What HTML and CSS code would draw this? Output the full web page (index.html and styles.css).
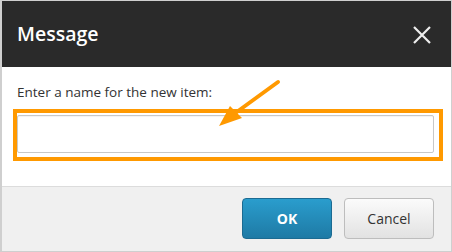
FILE: index.html
```html
<!DOCTYPE html>
<html>
<head>
<meta charset="utf-8">
<link rel="stylesheet" href="styles.css">
</head>
<body>
<div class="dialog">
  <div class="header">
    <span class="title">Message</span>
    <svg class="close" width="20" height="20" viewBox="0 0 20 20">
      <path d="M2 2 L18 18 M18 2 L2 18" stroke="#eeeeee" stroke-width="2.2" fill="none"/>
    </svg>
  </div>
  <div class="content">
    <div class="label">Enter a name for the new item:</div>
    <input class="field" type="text">
    <div class="highlight"></div>
    <svg class="arrow" width="80" height="60" viewBox="0 0 80 60">
      <line x1="76" y1="7" x2="32" y2="39" stroke="#ff9900" stroke-width="4" stroke-linecap="round"/>
      <polygon points="17,51 28,31 40,43" fill="#ff9900"/>
    </svg>
  </div>
  <div class="footer">
    <button class="btn ok">OK</button>
    <button class="btn cancel">Cancel</button>
  </div>
</div>
</body>
</html>
```

FILE: styles.css
```css
html, body {
  margin: 0;
  padding: 0;
  background: #ffffff;
}
.dialog {
  width: 452px;
  height: 252px;
  box-sizing: border-box;
  border: 1px solid #cfcfcf;
  border-left-width: 2px;
  display: flex;
  flex-direction: column;
  font-family: "Open Sans", "Liberation Sans", sans-serif;
  position: relative;
}
.header {
  height: 66px;
  flex: none;
  background: #2a2a2a;
  display: flex;
  align-items: center;
  justify-content: space-between;
  padding: 0 19px 0 15px;
}
.title {
  color: #ffffff;
  font-size: 19.5px;
  font-weight: 600;
  margin-top: -1px;
}
.close {
  display: block;
  margin-top: 1px;
}
.content {
  flex: none;
  height: 120px;
  box-sizing: border-box;
  background: #ffffff;
  padding: 16px 16px 0 15px;
  position: relative;
  border-bottom: 1px solid #dcdcdc;
}
.label {
  font-size: 13.5px;
  color: #333333;
  line-height: 18px;
}
.field {
  display: block;
  box-sizing: border-box;
  width: 417px;
  height: 38px;
  margin-top: 14px;
  border: 1px solid #c8c8c8;
  border-radius: 2px;
  background: #ffffff;
  box-shadow: inset 0 1px 1px rgba(0,0,0,0.05);
  padding: 0;
}
.highlight {
  position: absolute;
  left: 11px;
  top: 42px;
  width: 430px;
  height: 52px;
  box-sizing: border-box;
  border: 4px solid #ff9900;
}
.arrow {
  position: absolute;
  left: 200px;
  top: 8px;
}
.footer {
  flex: 1;
  background: #f0f0f0;
  display: flex;
  justify-content: flex-end;
  align-items: flex-start;
  gap: 12px;
  padding: 11px 17px 0 0;
}
.btn {
  width: 90px;
  height: 41px;
  border-radius: 4px;
  font-family: "Open Sans", "Liberation Sans", sans-serif;
  font-size: 14px;
  cursor: pointer;
  box-sizing: border-box;
  padding: 0;
}
.ok {
  color: #ffffff;
  font-weight: 700;
  background: linear-gradient(#2a9dcd, #1e7aa5);
  border: 1px solid #1b6b92;
}
.cancel {
  color: #333333;
  background: linear-gradient(#fbfbfb, #e2e2e2);
  border: 1px solid #bdbdbd;
}
```
